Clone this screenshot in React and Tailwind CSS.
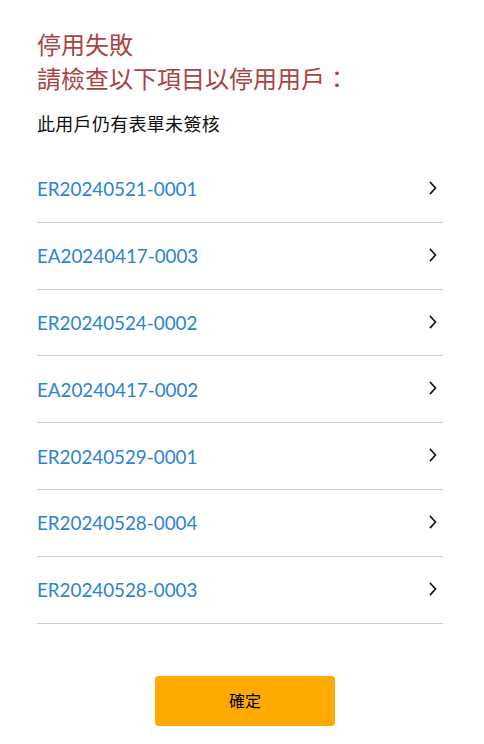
import React from "react";

const ids = [
  "ER20240521-0001",
  "EA20240417-0003",
  "ER20240524-0002",
  "EA20240417-0002",
  "ER20240529-0001",
  "ER20240528-0004",
  "ER20240528-0003",
];

function Chevron() {
  return (
    <svg width="10" height="14" viewBox="0 0 10 14" className="mr-[5px] mt-[-2px]" fill="none">
      <path d="M2.5 1.5 L7.5 7 L2.5 12.5" stroke="#111" strokeWidth="1.6" strokeLinecap="square" />
    </svg>
  );
}

export default function App() {
  const cjk = { fontFamily: "Lato, 'Noto Sans CJK TC', sans-serif" };
  return (
    <div className="w-[484px] h-[744px] bg-white" style={cjk}>
      <div className="pl-[37px] pr-[41px] pt-[28px]">
        <div className="text-[24px] leading-[34px] text-[#a94442]">
          <div>停用失敗</div>
          <div>請檢查以下項目以停用用戶：</div>
        </div>
        <div className="mt-[16px] text-[18px] leading-[24px] text-[#111] tracking-[0.3px]">此用戶仍有表單未簽核</div>
        <div className="mt-[20px]">
          {ids.map((id) => (
            <div
              key={id}
              className="h-[66.83px] border-b border-[#cfcfcf] flex items-center justify-between"
            >
              <span className="text-[18.8px] text-[#2b83d3] pt-[1px]" style={{ fontFamily: "Lato, sans-serif" }}>{id}</span>
              <Chevron />
            </div>
          ))}
        </div>
        <div className="flex mt-[52px] pl-[118px]">
          <button className="w-[180px] h-[50px] rounded-[4px] bg-[#ffaa00] text-[16px] text-black">
            確定
          </button>
        </div>
      </div>
    </div>
  );
}
